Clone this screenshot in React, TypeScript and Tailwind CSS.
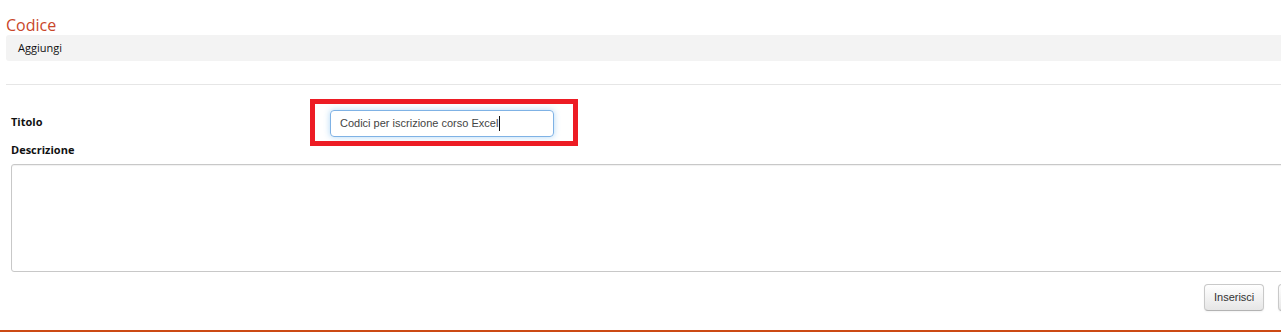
import React from "react";

export default function App() {
  return (
    <div className="w-[1281px] h-[334px] overflow-hidden bg-white relative">
      <div className="w-[1341px] px-[6px]">
        <div
          className="mt-[15px] text-[16px] leading-[20px] text-[#c9462a]"
          style={{ fontFamily: '"Open Sans", sans-serif' }}
        >
          Codice
        </div>
        <div
          className="h-[26px] bg-[#f3f3f3] rounded-l-[3px] pl-[12px] text-[11px] leading-[26px] text-[#111]"
          style={{ fontFamily: '"Open Sans", sans-serif' }}
        >
          Aggiungi
        </div>
        <div className="mt-[23px] h-px bg-[#e6e6e6]" />

        <div className="pl-[5px]">
          <div className="mt-[25px] flex items-start">
            <div
              className="w-[319px] pt-[4px] text-[11px] leading-[15px] font-bold text-[#111]"
              style={{ fontFamily: '"Open Sans", sans-serif' }}
            >
              Titolo
            </div>
            <div className="relative">
              <div
                className="w-[224px] h-[27px] border border-[#7fb2e5] rounded-[4px] pl-[9px] flex items-center text-[11px] text-[#444] shadow-[0_0_6px_rgba(82,168,236,0.45)]"
                style={{ fontFamily: '"Liberation Sans", Arial, sans-serif' }}
              >
                <span>Codici per iscrizione corso Excel</span>
                <span className="inline-block w-px h-[15px] bg-[#111] ml-px" />
              </div>
              <div className="absolute left-[-20px] top-[-11px] w-[268px] h-[47px] border-[5px] border-[#ed1c24] pointer-events-none" />
            </div>
          </div>

          <div
            className="mt-[5px] text-[11px] leading-[15px] font-bold text-[#111]"
            style={{ fontFamily: '"Open Sans", sans-serif' }}
          >
            Descrizione
          </div>
          <div className="mt-[7px] h-[108px] border border-[#c8c8c8] rounded-[3px] bg-white shadow-[inset_0_1px_1px_rgba(0,0,0,0.06)]" />

          <div
            className="mt-[12px] flex justify-end gap-[14px] text-[11px] text-[#333]"
            style={{ fontFamily: '"Liberation Sans", Arial, sans-serif' }}
          >
            <button className="h-[27px] px-[9px] border border-[#c9c9c9] border-b-[#b3b3b3] rounded-[4px] bg-gradient-to-b from-white to-[#e6e6e6] shadow-[0_1px_2px_rgba(0,0,0,0.05)]">
              Inserisci
            </button>
            <button className="h-[27px] px-[9px] border border-[#c9c9c9] border-b-[#b3b3b3] rounded-[4px] bg-gradient-to-b from-white to-[#e6e6e6] shadow-[0_1px_2px_rgba(0,0,0,0.05)]">
              Annulla
            </button>
          </div>
        </div>
      </div>
      <div className="mt-[19px] h-[2px] bg-[#cc4a14]" />
    </div>
  );
}
